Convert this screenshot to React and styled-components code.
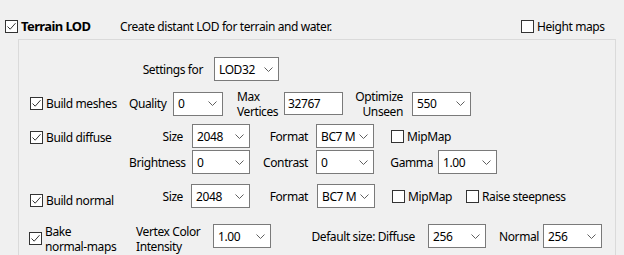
import styled, { createGlobalStyle } from 'styled-components'

const GlobalStyle = createGlobalStyle`
  html, body {
    margin: 0;
    padding: 0;
    background: #f0f0f0;
  }
  body {
    font-family: 'Noto Sans', 'Open Sans', sans-serif;
    font-size: 12px;
    letter-spacing: -0.4px;
    color: #000000;
  }
`

const CheckMark = ({ checked }) => (
  <Box>
    {checked && (
      <svg width="11" height="11" viewBox="0 0 11 11">
        <path d="M1.5 5.5 L4.2 8.2 L9.5 2.2" fill="none" stroke="#333" strokeWidth="1" />
      </svg>
    )}
  </Box>
)

const Check = ({ checked, children, w, bold, lines, dy }) => (
  <CheckField $w={w} $dy={dy}>
    <CheckMark checked={checked} />
    <CheckText $bold={bold} $lines={lines}>
      {children}
    </CheckText>
  </CheckField>
)

const Combo = ({ value, w }) => (
  <ComboBox $w={w}>
    <span>{value}</span>
    <svg width="9" height="5" viewBox="0 0 9 5">
      <path d="M0.5 0.5 L4.5 4.5 L8.5 0.5" fill="none" stroke="#606060" strokeWidth="1" />
    </svg>
  </ComboBox>
)

export default function App() {
  return (
    <Page>
      <GlobalStyle />
      <Header>
        <Check checked w={115} bold>
          Terrain LOD
        </Check>
        <Description>Create distant LOD for terrain and water.</Description>
        <Check w={84}>Height maps</Check>
      </Header>

      <Panel>
        <Row $h={24} $mt={17} $pl={0}>
          <Label $w={195} $pr={11}>Settings for</Label>
          <Combo value="LOD32" w={65} />
        </Row>

        <Row $h={25} $mt={10}>
          <Check checked w={99}>
            Build meshes
          </Check>
          <Label $w={44} $pr={7}>Quality</Label>
          <Combo value="0" w={50} />
          <Label $w={61} $pl={14} $left $lines>
            Max
            <br />
            Vertices
          </Label>
          <TextBox $w={59}>32767</TextBox>
          <Label $w={69} $pr={9} $lines>
            Optimize
            <br />
            Unseen
          </Label>
          <Combo value="550" w={59} />
        </Row>

        <Row $h={24} $mt={8}>
          <Check checked w={99} dy={2}>
            Build diffuse
          </Check>
          <Label $w={63} $pr={9}>Size</Label>
          <Combo value="2048" w={58} />
          <Label $w={66} $pr={8}>Format</Label>
          <Combo value="BC7 M" w={58} />
          <Spacer $w={17} />
          <Check w={80}>MipMap</Check>
        </Row>

        <Row $h={24} $mt={2}>
          <Spacer $w={99} />
          <Label $w={63} $pr={9}>Brightness</Label>
          <Combo value="0" w={58} />
          <Label $w={66} $pr={8}>Contrast</Label>
          <Combo value="0" w={58} />
          <Label $w={64} $pr={5}>Gamma</Label>
          <Combo value="1.00" w={59} />
        </Row>

        <Row $h={24} $mt={10}>
          <Check checked w={99} dy={8}>
            Build normal
          </Check>
          <Label $w={62} $pr={8}>Size</Label>
          <Combo value="2048" w={59} />
          <Label $w={67} $pr={9}>Format</Label>
          <Combo value="BC7 M" w={58} />
          <Spacer $w={17} />
          <Check w={74}>MipMap</Check>
          <Check w={110}>Raise steepness</Check>
        </Row>

        <Row $h={24} $mt={16} $pl={10}>
          <Check checked w={107} lines dy={5}>
            Bake
            <br />
            normal-maps
          </Check>
          <Label $w={77} $left $lines $dy={5}>
            Vertex Color
            <br />
            Intensity
          </Label>
          <Combo value="1.00" w={58} />
          <Label $w={157} $pr={13}>Default size: Diffuse</Label>
          <Combo value="256" w={58} />
          <Label $w={57} $pr={4}>Normal</Label>
          <Combo value="256" w={59} />
        </Row>
      </Panel>
    </Page>
  )
}

const Page = styled.div`
  width: 624px;
  height: 255px;
  overflow: hidden;
  background: #f0f0f0;
`

const Header = styled.div`
  display: flex;
  align-items: center;
  height: 14px;
  padding: 19px 19px 0 5px;
`

const Description = styled.div`
  flex: 1;
  white-space: nowrap;
`

const Panel = styled.div`
  margin: 6px 0 0 18px;
  width: 596px;
  height: 240px;
  border: 1px solid #dadada;
  border-bottom: none;
`

const Row = styled.div`
  display: flex;
  align-items: center;
  height: ${(p) => p.$h}px;
  margin-top: ${(p) => p.$mt}px;
  padding-left: ${(p) => p.$pl ?? 11}px;
`

const CheckField = styled.div`
  display: flex;
  align-items: center;
  flex: none;
  width: ${(p) => p.$w}px;
  margin-top: ${(p) => p.$dy ?? 0}px;
`

const Box = styled.span`
  display: flex;
  align-items: center;
  justify-content: center;
  flex: none;
  box-sizing: border-box;
  width: 13px;
  height: 13px;
  border: 1px solid #333333;
  background: #ffffff;
`

const CheckText = styled.span`
  margin-left: 3px;
  white-space: nowrap;
  font-weight: ${(p) => (p.$bold ? 700 : 400)};
  font-size: ${(p) => (p.$bold ? '13px' : '12px')};
  letter-spacing: ${(p) => (p.$bold ? '-0.6px' : '-0.4px')};
  line-height: ${(p) => (p.$lines ? '15px' : 'normal')};
`

const Label = styled.div`
  flex: none;
  box-sizing: border-box;
  width: ${(p) => p.$w}px;
  padding-right: ${(p) => p.$pr ?? 0}px;
  padding-left: ${(p) => p.$pl ?? 0}px;
  text-align: ${(p) => (p.$left ? 'left' : 'right')};
  white-space: nowrap;
  line-height: ${(p) => (p.$lines ? '15px' : 'normal')};
  margin-top: ${(p) => p.$dy ?? 0}px;
`

const Spacer = styled.div`
  flex: none;
  width: ${(p) => p.$w}px;
`

const ComboBox = styled.div`
  display: flex;
  align-items: center;
  justify-content: space-between;
  flex: none;
  box-sizing: border-box;
  width: ${(p) => p.$w}px;
  height: 24px;
  padding: 0 5px 0 4px;
  border: 1px solid #7a7a7a;
  background: #ffffff;
  white-space: nowrap;
`

const TextBox = styled.div`
  display: flex;
  align-items: center;
  flex: none;
  box-sizing: border-box;
  width: ${(p) => p.$w}px;
  height: 23px;
  padding-left: 3px;
  border: 1px solid #7a7a7a;
  background: #ffffff;
`
